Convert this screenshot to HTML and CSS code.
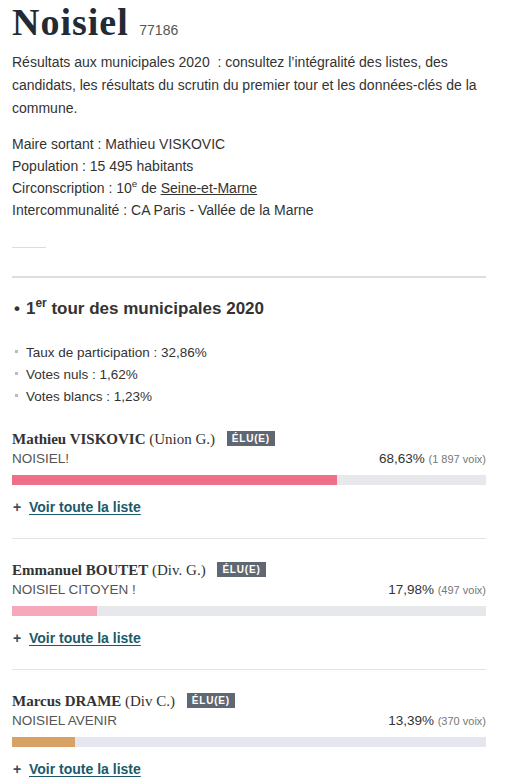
FILE: index.html
```html
<!DOCTYPE html>
<html lang="fr">
<head>
<meta charset="utf-8">
<link rel="stylesheet" href="styles.css">
</head>
<body>
<div class="page">
  <h1 class="title">Noisiel <span class="zip">77186</span></h1>
  <p class="intro">Résultats aux municipales 2020 &nbsp;: consultez l’intégralité des listes, des candidats, les résultats du scrutin du premier tour et les données-clés de la commune.</p>
  <ul class="facts">
    <li>Maire sortant : Mathieu VISKOVIC</li>
    <li>Population : 15 495 habitants</li>
    <li>Circonscription : 10<sup>e</sup> de <a href="#">Seine-et-Marne</a></li>
    <li>Intercommunalité : CA Paris - Vallée de la Marne</li>
  </ul>
  <div class="short-rule"></div>
  <div class="thick-rule"></div>
  <h2 class="round"><span class="dot">•</span>1<sup>er</sup> tour des municipales 2020</h2>
  <ul class="stats">
    <li>Taux de participation : 32,86%</li>
    <li>Votes nuls : 1,62%</li>
    <li>Votes blancs : 1,23%</li>
  </ul>

  <div class="cand">
    <div class="name"><b>Mathieu VISKOVIC</b> (Union G.) <span class="badge">ÉLU(E)</span></div>
    <div class="row"><span class="list">NOISIEL!</span><span class="score">68,63% <small>(1 897 voix)</small></span></div>
    <div class="bar"><div class="fill c1" style="width:68.63%"></div></div>
    <a class="more" href="#"><span class="plus">+</span><u>Voir toute la liste</u></a>
  </div>

  <div class="cand">
    <div class="name"><b>Emmanuel BOUTET</b> (Div. G.) <span class="badge">ÉLU(E)</span></div>
    <div class="row"><span class="list">NOISIEL CITOYEN !</span><span class="score">17,98% <small>(497 voix)</small></span></div>
    <div class="bar"><div class="fill c2" style="width:17.98%"></div></div>
    <a class="more" href="#"><span class="plus">+</span><u>Voir toute la liste</u></a>
  </div>

  <div class="cand last">
    <div class="name"><b>Marcus DRAME</b> (Div C.) <span class="badge">ÉLU(E)</span></div>
    <div class="row"><span class="list">NOISIEL AVENIR</span><span class="score">13,39% <small>(370 voix)</small></span></div>
    <div class="bar b3"><div class="fill c3" style="width:13.39%"></div></div>
    <a class="more" href="#"><span class="plus">+</span><u>Voir toute la liste</u></a>
  </div>
</div>
</body>
</html>
```
FILE: styles.css
```css
html, body {
  margin: 0;
  padding: 0;
  background: #fff;
}
body {
  font-family: "Liberation Sans", Arial, sans-serif;
  color: #333;
  font-size: 14px;
}
.page {
  padding: 0 42px 20px 12px;
}
.title {
  margin: 0;
  padding-top: 2px;
  height: 40px;
  overflow: hidden;
  font-family: "Liberation Serif", "Times New Roman", serif;
  font-weight: bold;
  font-size: 38px;
  line-height: 40px;
  color: #222a33;
  letter-spacing: 1px;
}
.zip {
  font-family: "Liberation Sans", Arial, sans-serif;
  font-weight: normal;
  font-size: 14px;
  line-height: 14px;
  color: #555;
  letter-spacing: 0;
}
.intro {
  margin: 9px 0 0;
  font-size: 14px;
  line-height: 23px;
  color: #333;
}
.facts {
  list-style: none;
  margin: 13px 0 0;
  padding: 0;
  line-height: 22px;
}
.facts sup, .round sup {
  font-size: 0.7em;
  line-height: 0;
}
.facts a {
  color: #333;
  text-decoration: underline;
}
.short-rule {
  width: 34px;
  height: 1px;
  background: #ddd;
  margin-top: 26px;
}
.thick-rule {
  height: 2px;
  background: #ddd;
  margin-top: 28px;
}
.round {
  margin: 20px 0 0;
  font-size: 17px;
  line-height: 22px;
  font-weight: bold;
  color: #333;
}
.round .dot {
  display: inline-block;
  width: 12px;
  margin-left: 2px;
}
.stats {
  list-style: none;
  margin: 22px 0 0;
  padding: 0;
  font-size: 13.5px;
  line-height: 22px;
}
.stats li::before {
  content: "";
  display: inline-block;
  width: 3px;
  height: 3px;
  background: #bbb;
  margin: 0 8px 3px 3px;
  vertical-align: middle;
}
.cand {
  margin-top: 21px;
  padding-bottom: 21px;
  border-bottom: 1px solid #e4e4e4;
}
.cand.last {
  border-bottom: none;
}
.name {
  font-family: "Liberation Serif", "Times New Roman", serif;
  font-size: 15px;
  line-height: 20px;
  height: 20px;
  color: #333;
}
.badge {
  display: inline-block;
  margin-left: 8px;
  padding: 1px 5px;
  background: #5f6872;
  color: #fff;
  font-family: "Liberation Sans", Arial, sans-serif;
  font-size: 10px;
  font-weight: bold;
  letter-spacing: 0.8px;
  line-height: 13px;
  vertical-align: 2px;
}
.row {
  display: flex;
  justify-content: space-between;
  align-items: baseline;
  line-height: 20px;
  height: 20px;
  font-size: 13.5px;
}
.list {
  color: #555;
  text-transform: uppercase;
}
.score {
  color: #333;
}
.score small {
  font-size: 11px;
  color: #777;
}
.bar {
  height: 10px;
  background: #e6e8eb;
  margin-top: 6px;
}
.bar.b3 {
  background: #e6e6ee;
}
.fill {
  height: 100%;
}
.c1 { background: #ef6f88; }
.c2 { background: #f5a8ba; }
.c3 { background: #d9a265; }
.more {
  display: block;
  margin-top: 12px;
  font-size: 14px;
  font-weight: bold;
  line-height: 20px;
  height: 20px;
  color: #1a5a6a;
  text-decoration: none;
}
.more .plus {
  display: inline-block;
  margin-left: 1px;
  color: #3e4e58;
  width: 16px;
}
.more u {
  text-decoration: underline;
  text-underline-offset: 2px;
}
```
